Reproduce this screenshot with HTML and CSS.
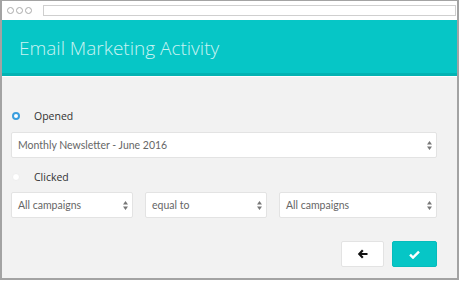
FILE: index.html
```html
<!DOCTYPE html>
<html lang="en">
<head>
    <meta charset="UTF-8">
    <title>Email Marketing Activity</title>
    <link rel="stylesheet" href="styles.css">
</head>
<body>
    <div class="window">
        <div class="toolbar">
            <span class="dot"></span>
            <span class="dot"></span>
            <span class="dot"></span>
            <div class="address"></div>
        </div>

        <div class="header">
            <h1>Email Marketing Activity</h1>
        </div>

        <div class="content">
            <label class="radio-row">
                <span class="radio checked"></span>
                <span class="radio-label">Opened</span>
            </label>

            <div class="select wide">
                <span>Monthly Newsletter - June 2016</span>
                <svg class="arrows" width="5" height="9" viewBox="0 0 5 9"><path d="M2.5 0 L5 3.5 H0 Z M2.5 9 L5 5.5 H0 Z" fill="#777"/></svg>
            </div>

            <label class="radio-row second">
                <span class="radio"></span>
                <span class="radio-label">Clicked</span>
            </label>

            <div class="select-row">
                <div class="select small">
                    <span>All campaigns</span>
                    <svg class="arrows" width="5" height="9" viewBox="0 0 5 9"><path d="M2.5 0 L5 3.5 H0 Z M2.5 9 L5 5.5 H0 Z" fill="#777"/></svg>
                </div>
                <div class="select small">
                    <span>equal to</span>
                    <svg class="arrows" width="5" height="9" viewBox="0 0 5 9"><path d="M2.5 0 L5 3.5 H0 Z M2.5 9 L5 5.5 H0 Z" fill="#777"/></svg>
                </div>
                <div class="select large">
                    <span>All campaigns</span>
                    <svg class="arrows" width="5" height="9" viewBox="0 0 5 9"><path d="M2.5 0 L5 3.5 H0 Z M2.5 9 L5 5.5 H0 Z" fill="#777"/></svg>
                </div>
            </div>

            <div class="actions">
                <button class="btn back">
                    <svg width="11" height="10" viewBox="0 0 11 10"><path d="M5 0.5 L0.8 5 L5 9.5 L6.6 8 L4.6 6.1 H10.5 V3.9 H4.6 L6.6 2 Z" fill="#111"/></svg>
                </button>
                <button class="btn ok">
                    <svg width="11" height="9" viewBox="0 0 11 9"><path d="M1 4.6 L4 7.6 L10 1.6" fill="none" stroke="#fff" stroke-width="2.4"/></svg>
                </button>
            </div>
        </div>
    </div>
</body>
</html>
```

FILE: styles.css
```css
body {
    margin: 0;
    font-family: Lato, "Open Sans", sans-serif;
    background: #fff;
}
.window {
    width: 459px;
    height: 280px;
    box-sizing: border-box;
    border: 2px solid #a3a3a3;
    border-top-width: 1px;
    display: flex;
    flex-direction: column;
    background: #f2f2f2;
}
.toolbar {
    height: 19px;
    background: #fff;
    display: flex;
    align-items: center;
    padding-left: 5px;
    gap: 2px;
}
.dot {
    width: 5px;
    height: 5px;
    border: 1px solid #aaa;
    border-radius: 50%;
}
.address {
    flex: 1;
    height: 9px;
    margin: 0 1px 0 9px;
    border: 1px solid #cfcfcf;
    background: #fff;
}
.header {
    height: 53px;
    background: #06c6c6;
    border-bottom: 3px solid #04b3b3;
    box-shadow: 0 1px 0 #fff;
    display: flex;
    align-items: center;
    padding-left: 17px;
}
h1 {
    margin: 0;
    font-family: "Open Sans", sans-serif;
    font-weight: 300;
    font-size: 19px;
    color: #c9f3f3;
    padding-top: 2px;
}
.content {
    padding: 0 20px 0 9px;
    display: flex;
    flex-direction: column;
}
.radio-row {
    display: flex;
    align-items: center;
    margin-top: 35px;
    height: 10px;
    font-family: "Open Sans", sans-serif;
    font-size: 10.5px;
    color: #333;
}
.radio-row.second {
    margin-top: 14px;
}
.radio {
    width: 4px;
    height: 4px;
    margin-left: 1px;
    border: 2px solid #3a9ede;
    border-radius: 50%;
    background: #fff;
    box-sizing: content-box;
}
.radio:not(.checked) {
    border: 1px solid #eee;
    width: 6px;
    height: 6px;
}
.radio-label {
    margin-left: 14px;
}
.select {
    height: 26px;
    box-sizing: border-box;
    background: #fff;
    border: 1px solid #e3e3e3;
    border-radius: 2px;
    display: flex;
    align-items: center;
    justify-content: space-between;
    padding: 0 4px 0 6px;
    font-size: 10.5px;
    color: #666;
}
.select.wide {
    margin-top: 11px;
}
.select-row {
    display: flex;
    gap: 12px;
    margin-top: 10px;
}
.select.small {
    width: 122px;
}
.select.large {
    flex: 1;
}
.actions {
    display: flex;
    justify-content: flex-end;
    gap: 8px;
    margin-top: 23px;
}
.btn {
    height: 26px;
    border-radius: 2px;
    display: flex;
    align-items: center;
    justify-content: center;
    padding: 0;
}
.btn.back {
    width: 43px;
    background: #fff;
    border: 1px solid #e3e3e3;
}
.btn.ok {
    width: 45px;
    background: #06c6c6;
    border: 1px solid #05bcbc;
}
```
